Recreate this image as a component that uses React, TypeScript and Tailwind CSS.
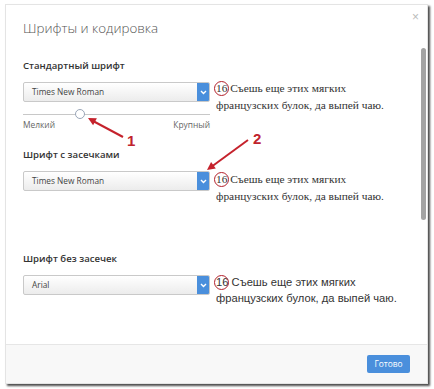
import React from 'react'

const SANS = { fontFamily: '"Open Sans", "Noto Sans", sans-serif' }
const SERIF = { fontFamily: '"Liberation Serif", "DejaVu Serif", serif' }
const ARIAL = { fontFamily: '"Liberation Sans", Arial, sans-serif' }

function Select({ value }: { value: string }) {
  return (
    <div className="flex h-[20px] w-[187px] rounded-[2px] border border-[#c9c9c9] bg-gradient-to-b from-white to-[#ececec] overflow-hidden">
      <div className="flex-1 pl-[8px] text-[8.3px] leading-[18px] text-[#444]" style={SANS}>
        {value}
      </div>
      <div className="w-[12px] bg-[#4a8fdc] flex items-center justify-center">
        <svg width="7" height="5" viewBox="0 0 7 5">
          <path d="M1 1 L3.5 3.5 L6 1" stroke="white" strokeWidth="1.4" fill="none" />
        </svg>
      </div>
    </div>
  )
}

function Preview({ serif, className }: { serif: boolean; className?: string }) {
  return (
    <div
      className={`${serif ? 'text-[11.4px] leading-[17px]' : 'text-[11.2px] leading-[16px]'} text-[#333] ${className ?? ''}`}
      style={serif ? SERIF : ARIAL}
    >
      <span className="relative inline-block">
        16
        <span className="absolute left-[-2px] top-[1px] w-[15px] h-[15px] rounded-full border-[1.5px] border-[#b3202b]" />
      </span>{' '}
      Съешь еще этих мягких
      <br />
      французских булок, да выпей чаю.
    </div>
  )
}

function Label({ children, className }: { children: React.ReactNode; className?: string }) {
  return (
    <div className={`text-[9.6px] leading-[16px] font-semibold text-[#333] ${className ?? ''}`} style={SANS}>
      {children}
    </div>
  )
}

export default function App() {
  return (
    <div className="relative w-[434px] h-[389px] bg-white pt-[4px] pl-[5px] overflow-hidden">
      <div className="relative w-[423px] h-[380px] bg-white border border-[#e4e4e4] shadow-[2px_2px_2px_rgba(0,0,0,0.7)] flex flex-col">
        <div className="flex-1 overflow-hidden pl-[17px]">
          <div className="mt-[11px] text-[13.4px] leading-[24px] font-light text-[#555]" style={SANS}>
            Шрифты и кодировка
          </div>

          <Label className="mt-[18px]">Стандартный шрифт</Label>
          <div className="mt-[8px] grid grid-cols-[187px_1fr] gap-x-[6px]">
            <div>
              <Select value="Times New Roman" />
              <div className="relative mt-[7px] h-[10px] flex items-center">
                <div className="w-full h-px bg-[#c8c8c8]" />
                <div className="absolute left-[52px] top-0 w-[10px] h-[10px] rounded-full bg-white border border-[#9aa6b8]" />
              </div>
              <div className="flex justify-between text-[8.4px] leading-[12px] text-[#666]" style={SANS}>
                <span>Мелкий</span>
                <span>Крупный</span>
              </div>
            </div>
            <Preview serif className="mt-[-2px]" />
          </div>

          <Label className="mt-[16px]">Шрифт с засечками</Label>
          <div className="mt-[8px] grid grid-cols-[187px_1fr] gap-x-[6px]">
            <Select value="Times New Roman" />
            <Preview serif />
          </div>

          <Label className="mt-[46px]">Шрифт без засечек</Label>
          <div className="mt-[8px] grid grid-cols-[187px_1fr] gap-x-[6px]">
            <Select value="Arial" />
            <Preview serif={false} className="mt-[-1px]" />
          </div>

          <Label className="mt-[45px]">Моноширинный шрифт</Label>
        </div>

        <div className="h-[39px] shrink-0 border-t border-[#e6e6e6] bg-[#f8f8f8] flex items-start justify-end pr-[17px] pt-[10px]">
          <button
            className="h-[18px] w-[43px] rounded-[2px] bg-[#4a8fdc] text-white text-[8.4px] leading-[18px]"
            style={SANS}
          >
            Готово
          </button>
        </div>

        <div className="absolute right-[8px] top-[6px] text-[12px] leading-[12px] text-[#bbb]" style={ARIAL}>
          ×
        </div>
        <div className="absolute right-[1px] top-[43px] w-[5px] h-[172px] rounded-[3px] bg-[#a3a3a3]" />
      </div>

      <svg className="absolute left-0 top-0 pointer-events-none" width="434" height="389">
        <line x1="123" y1="137" x2="94" y2="121.5" stroke="#c5222c" strokeWidth="2" />
        <polygon points="88,118 96.9,118.3 93.1,125.3" fill="#c5222c" />
        <text x="127" y="146" fill="#c0232d" fontSize="15" fontWeight="bold" style={ARIAL}>
          1
        </text>
        <line x1="248" y1="140" x2="212.5" y2="166" stroke="#c5222c" strokeWidth="2" />
        <polygon points="207,170 215.8,168.5 211.1,162.1" fill="#c5222c" />
        <text x="253" y="144" fill="#c0232d" fontSize="15" fontWeight="bold" style={ARIAL}>
          2
        </text>
      </svg>
    </div>
  )
}
